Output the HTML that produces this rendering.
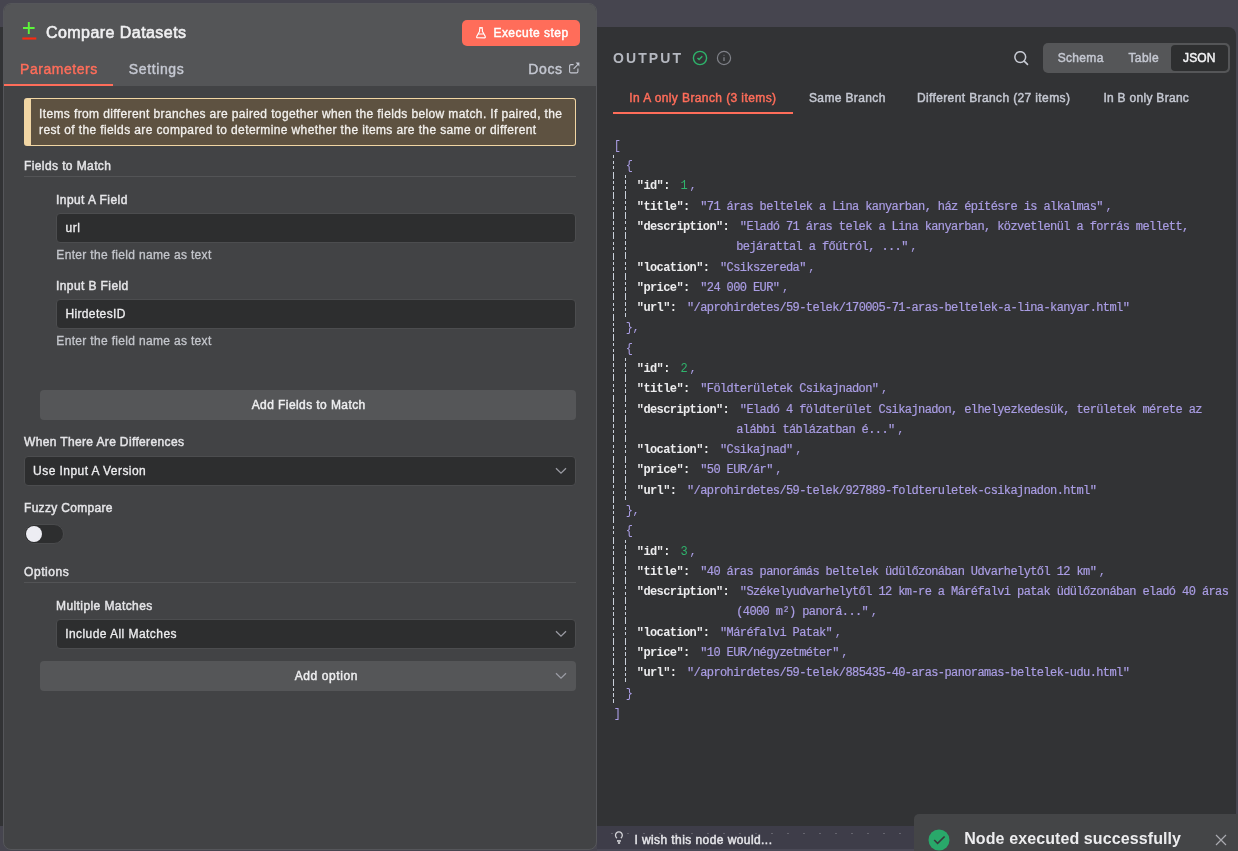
<!DOCTYPE html>
<html><head><meta charset="utf-8"><title>Compare Datasets</title>
<style>
*{box-sizing:border-box;margin:0;padding:0}
html,body{width:1238px;height:851px;overflow:hidden;background:#46454f;font-family:"Liberation Sans",sans-serif;position:relative}
#root{position:absolute;left:0;top:0;width:1238px;height:851px;will-change:transform}
.a{position:absolute}
.t{position:absolute;white-space:nowrap}
.m{position:absolute;white-space:pre;font-family:"Liberation Mono",monospace;font-size:12px;line-height:12px;letter-spacing:-0.600px}
.m b{color:#ececee;font-weight:bold}
.m i{color:#aa9de4;font-style:normal;-webkit-text-stroke:0.2px #aa9de4}
.m u{color:#2fb36c;text-decoration:none}
.m em{color:#aa9de4;font-style:normal}
.m em.cm{margin-left:2.5px}
.g{position:absolute;width:1px;background:repeating-linear-gradient(to bottom,#c9d0da 0 3.3px,transparent 3.3px 5.5px,#c9d0da 5.5px 8.8px,transparent 8.8px 11px,#c9d0da 11px 14.3px,transparent 14.3px 16.5px,#c9d0da 16.5px 20.286px)}
#dark{position:absolute;left:0;top:27px;width:1236px;height:799px;background:#323335;border-top-right-radius:8px}
#left{position:absolute;left:3px;top:3px;width:594px;height:847px;background:#424345;border:1px solid #55565a;border-radius:8px}
#lhead{position:absolute;left:4px;top:4px;width:592px;height:82px;background:#545557;border-radius:7px 7px 0 0}
.inp{position:absolute;background:#2d2e2f;border:1px solid #4c4d4f;border-radius:4px}
.btn{position:absolute;background:#555658;border-radius:4px}
</style></head>
<body><div id="root">
<div id="dark"></div>
<div id="left"></div>
<div id="lhead"></div>
<svg class="a" style="left:20px;top:20px" width="18" height="22" viewBox="0 0 18 22"><path d="M8.8 2v12M3 8h11.6" stroke="#5cf53a" stroke-width="1.9" fill="none"/><path d="M2.3 18.5h14" stroke="#ff2a10" stroke-width="2.1" fill="none"/></svg>
<div class="t" style="left:46.00px;top:24.76px;font-size:16px;line-height:16px;color:#f0f0f2;font-weight:normal;letter-spacing:0.444px;-webkit-text-stroke:0.60px #f0f0f2;">Compare Datasets</div>
<div class="a" style="left:462px;top:20px;width:118px;height:26px;background:#ff6d5a;border-radius:5px"></div>
<svg class="a" style="left:475px;top:26px" width="12" height="14" viewBox="0 0 12 14"><path d="M4.2 1.9h3.6" stroke="#fff" stroke-width="1.6"/><path d="M4.6 2.6v2.6L1.7 10.6a0.8 0.8 0 0 0 0.7 1.2h7.2a0.8 0.8 0 0 0 0.7-1.2L7.4 5.2V2.6M3.1 8h5.8" fill="none" stroke="#fff" stroke-width="1.15" stroke-linejoin="round"/></svg>
<div class="t" style="left:493.40px;top:26.54px;font-size:12px;line-height:12px;color:#ffffff;font-weight:normal;letter-spacing:0.489px;-webkit-text-stroke:0.45px #ffffff;">Execute step</div>
<div class="t" style="left:20.10px;top:62.05px;font-size:14px;line-height:14px;color:#ff6d5a;font-weight:normal;letter-spacing:0.52px;-webkit-text-stroke:0.42px #ff6d5a;">Parameters</div>
<div class="a" style="left:4px;top:84px;width:109px;height:2px;background:#ff6d5a"></div>
<div class="t" style="left:128.80px;top:62.05px;font-size:14px;line-height:14px;color:#c5c8d2;font-weight:normal;letter-spacing:0.62px;-webkit-text-stroke:0.42px #c5c8d2;">Settings</div>
<div class="t" style="left:528.30px;top:61.95px;font-size:14px;line-height:14px;color:#c5c8d2;font-weight:normal;letter-spacing:0.6px;-webkit-text-stroke:0.42px #c5c8d2;">Docs</div>
<svg class="a" style="left:568px;top:62px" width="12" height="12" viewBox="0 0 12 12"><path d="M5.6 2.6H3a1.4 1.4 0 0 0-1.4 1.4v5.5A1.4 1.4 0 0 0 3 10.9h5.5a1.4 1.4 0 0 0 1.4-1.4V6.4M5.6 6.8l4.6-4.6" fill="none" stroke="#c5c8d2" stroke-width="1.1"/><path d="M7.6 0.6h3.8v3.8z" fill="#c5c8d2"/></svg>
<div class="a" style="left:24px;top:98px;width:552px;height:48px;background:#5e5241;border:1px solid #f1d6a4;border-left:7px solid #f1d6a4;border-radius:3px"></div>
<div class="t" style="left:39.00px;top:108.24px;font-size:12px;line-height:12px;color:#f3f1ee;font-weight:normal;letter-spacing:0.38px;-webkit-text-stroke:0.3px #f3f1ee;">Items from different branches are paired together when the fields below match. If paired, the</div>
<div class="t" style="left:39.00px;top:123.94px;font-size:12px;line-height:12px;color:#f3f1ee;font-weight:normal;letter-spacing:0.38px;-webkit-text-stroke:0.3px #f3f1ee;">rest of the fields are compared to determine whether the items are the same or different</div>
<div class="t" style="left:24.00px;top:160.14px;font-size:12px;line-height:12px;color:#e5e5e8;font-weight:normal;letter-spacing:0.398px;-webkit-text-stroke:0.45px #e5e5e8;">Fields to Match</div>
<div class="a" style="left:24px;top:176px;width:552px;height:1px;background:#535456"></div>
<div class="t" style="left:56.00px;top:193.74px;font-size:12px;line-height:12px;color:#e5e5e8;font-weight:normal;letter-spacing:0.44px;-webkit-text-stroke:0.45px #e5e5e8;">Input A Field</div>
<div class="inp" style="left:56px;top:213px;width:520px;height:30px"></div>
<div class="t" style="left:65.40px;top:221.64px;font-size:12px;line-height:12px;color:#eeeef0;font-weight:normal;letter-spacing:0.6px;-webkit-text-stroke:0.3px #eeeef0;">url</div>
<div class="t" style="left:56.30px;top:248.74px;font-size:12px;line-height:12px;color:#c4c6cc;font-weight:normal;letter-spacing:0.33px;-webkit-text-stroke:0.3px #c4c6cc;">Enter the field name as text</div>
<div class="t" style="left:56.00px;top:279.84px;font-size:12px;line-height:12px;color:#e5e5e8;font-weight:normal;letter-spacing:0.406px;-webkit-text-stroke:0.45px #e5e5e8;">Input B Field</div>
<div class="inp" style="left:56px;top:299px;width:520px;height:30px"></div>
<div class="t" style="left:65.40px;top:307.84px;font-size:12px;line-height:12px;color:#eeeef0;font-weight:normal;letter-spacing:0.37px;-webkit-text-stroke:0.3px #eeeef0;">HirdetesID</div>
<div class="t" style="left:56.30px;top:334.84px;font-size:12px;line-height:12px;color:#c4c6cc;font-weight:normal;letter-spacing:0.33px;-webkit-text-stroke:0.3px #c4c6cc;">Enter the field name as text</div>
<div class="btn" style="left:40px;top:390px;width:536px;height:30px"></div>
<div class="t" style="left:251.70px;top:398.54px;font-size:12px;line-height:12px;color:#eeeef0;font-weight:normal;letter-spacing:0.418px;-webkit-text-stroke:0.45px #eeeef0;">Add Fields to Match</div>
<div class="t" style="left:24.00px;top:435.84px;font-size:12px;line-height:12px;color:#e5e5e8;font-weight:normal;letter-spacing:0.358px;-webkit-text-stroke:0.45px #e5e5e8;">When There Are Differences</div>
<div class="inp" style="left:24px;top:456px;width:552px;height:30px"></div>
<div class="t" style="left:33.10px;top:464.84px;font-size:12px;line-height:12px;color:#eeeef0;font-weight:normal;letter-spacing:0.44px;-webkit-text-stroke:0.3px #eeeef0;">Use Input A Version</div>
<svg class="a" style="left:555px;top:467px" width="12" height="8" viewBox="0 0 12 8"><path d="M1 1.2l5 5 5-5" fill="none" stroke="#9b9ca4" stroke-width="1.3"/></svg>
<div class="t" style="left:24.00px;top:502.04px;font-size:12px;line-height:12px;color:#e5e5e8;font-weight:normal;letter-spacing:0.306px;-webkit-text-stroke:0.45px #e5e5e8;">Fuzzy Compare</div>
<div class="a" style="left:24px;top:524px;width:40px;height:20px;background:#2d2e2f;border:1px solid #4a4b4d;border-radius:10px"></div>
<div class="a" style="left:26px;top:526px;width:16px;height:16px;background:#ededf3;border-radius:50%"></div>
<div class="t" style="left:24.00px;top:566.24px;font-size:12px;line-height:12px;color:#e5e5e8;font-weight:normal;letter-spacing:0.567px;-webkit-text-stroke:0.45px #e5e5e8;">Options</div>
<div class="a" style="left:24px;top:582px;width:552px;height:1px;background:#535456"></div>
<div class="t" style="left:56.00px;top:599.64px;font-size:12px;line-height:12px;color:#e5e5e8;font-weight:normal;letter-spacing:0.415px;-webkit-text-stroke:0.45px #e5e5e8;">Multiple Matches</div>
<div class="inp" style="left:56px;top:619px;width:520px;height:30px"></div>
<div class="t" style="left:65.20px;top:627.94px;font-size:12px;line-height:12px;color:#eeeef0;font-weight:normal;letter-spacing:0.44px;-webkit-text-stroke:0.3px #eeeef0;">Include All Matches</div>
<svg class="a" style="left:555px;top:630px" width="12" height="8" viewBox="0 0 12 8"><path d="M1 1.2l5 5 5-5" fill="none" stroke="#9b9ca4" stroke-width="1.3"/></svg>
<div class="btn" style="left:40px;top:661px;width:536px;height:30px"></div>
<div class="t" style="left:294.70px;top:669.54px;font-size:12px;line-height:12px;color:#eeeef0;font-weight:normal;letter-spacing:0.592px;-webkit-text-stroke:0.45px #eeeef0;">Add option</div>
<svg class="a" style="left:555px;top:672px" width="12" height="8" viewBox="0 0 12 8"><path d="M1 1.2l5 5 5-5" fill="none" stroke="#9b9ca4" stroke-width="1.3"/></svg>
<div class="t" style="left:613.00px;top:51.35px;font-size:14px;line-height:14px;color:#b5b8c0;font-weight:bold;letter-spacing:2.1px;">OUTPUT</div>
<svg class="a" style="left:692px;top:50px" width="16" height="16" viewBox="0 0 16 16"><circle cx="8" cy="8" r="6.6" fill="none" stroke="#2eb36b" stroke-width="1.4"/><path d="M5.5 8l1.6 1.5 3.2-3.2" fill="none" stroke="#2eb36b" stroke-width="1.5"/></svg>
<svg class="a" style="left:716px;top:50px" width="16" height="16" viewBox="0 0 16 16"><circle cx="8" cy="8" r="6.6" fill="none" stroke="#7f8188" stroke-width="1.2"/><path d="M8 7.2v3.8" stroke="#7f8188" stroke-width="1.3"/><path d="M7.3 5.3h1.4" stroke="#6f7177" stroke-width="0.8"/></svg>
<svg class="a" style="left:1013px;top:51px" width="16" height="16" viewBox="0 0 16 16"><circle cx="7.25" cy="6.1" r="5.4" fill="none" stroke="#c9ccd5" stroke-width="1.5"/><path d="M11.2 10.1l3.3 3.3" stroke="#c9ccd5" stroke-width="1.6" stroke-linecap="round"/></svg>
<div class="a" style="left:1043px;top:43px;width:187px;height:30px;background:#555658;border-radius:5px"></div>
<div class="a" style="left:1171px;top:45px;width:57px;height:26px;background:#2e2f30;border-radius:4px"></div>
<div class="t" style="left:1057.70px;top:51.74px;font-size:12px;line-height:12px;color:#c5c8d2;font-weight:normal;letter-spacing:0.333px;-webkit-text-stroke:0.45px #c5c8d2;">Schema</div>
<div class="t" style="left:1128.50px;top:51.74px;font-size:12px;line-height:12px;color:#c5c8d2;font-weight:normal;letter-spacing:0.353px;-webkit-text-stroke:0.45px #c5c8d2;">Table</div>
<div class="t" style="left:1183.00px;top:51.74px;font-size:12px;line-height:12px;color:#f4f4f6;font-weight:normal;letter-spacing:0.168px;-webkit-text-stroke:0.45px #f4f4f6;">JSON</div>
<div class="t" style="left:629.30px;top:91.84px;font-size:12px;line-height:12px;color:#ff6d5a;font-weight:normal;letter-spacing:0.4px;-webkit-text-stroke:0.45px #ff6d5a;">In A only Branch (3 items)</div>
<div class="a" style="left:613px;top:112px;width:180px;height:2px;background:#ff6d5a"></div>
<div class="t" style="left:809.00px;top:91.84px;font-size:12px;line-height:12px;color:#c5c8d2;font-weight:normal;letter-spacing:0.364px;-webkit-text-stroke:0.45px #c5c8d2;">Same Branch</div>
<div class="t" style="left:916.90px;top:91.84px;font-size:12px;line-height:12px;color:#c5c8d2;font-weight:normal;letter-spacing:0.378px;-webkit-text-stroke:0.45px #c5c8d2;">Different Branch (27 items)</div>
<div class="t" style="left:1103.40px;top:91.84px;font-size:12px;line-height:12px;color:#c5c8d2;font-weight:normal;letter-spacing:0.293px;-webkit-text-stroke:0.45px #c5c8d2;">In B only Branc</div>
<div class="m" style="left:613.80px;top:139.81px"><em>[</em></div>
<div class="m" style="left:625.80px;top:160.09px"><em>{</em></div>
<div class="m" style="left:636.80px;top:180.38px"><b>&quot;id&quot;:</b></div>
<div class="m" style="left:680.40px;top:180.38px"><u>1</u><em class="cm">,</em></div>
<div class="m" style="left:636.80px;top:200.67px"><b>&quot;title&quot;:</b></div>
<div class="m" style="left:700.20px;top:200.67px"><i>&quot;71 áras beltelek a Lina kanyarban, ház építésre is alkalmas&quot;</i><em class="cm">,</em></div>
<div class="m" style="left:636.80px;top:220.95px"><b>&quot;description&quot;:</b></div>
<div class="m" style="left:739.80px;top:220.95px"><i>&quot;Eladó 71 áras telek a Lina kanyarban, közvetlenül a forrás mellett,</i></div>
<div class="m" style="left:736.20px;top:241.24px"><i>bejárattal a főútról, ...&quot;</i><em class="cm">,</em></div>
<div class="m" style="left:636.80px;top:261.52px"><b>&quot;location&quot;:</b></div>
<div class="m" style="left:720.00px;top:261.52px"><i>&quot;Csikszereda&quot;</i><em class="cm">,</em></div>
<div class="m" style="left:636.80px;top:281.81px"><b>&quot;price&quot;:</b></div>
<div class="m" style="left:700.20px;top:281.81px"><i>&quot;24 000 EUR&quot;</i><em class="cm">,</em></div>
<div class="m" style="left:636.80px;top:302.10px"><b>&quot;url&quot;:</b></div>
<div class="m" style="left:687.00px;top:302.10px"><i>&quot;/aprohirdetes/59-telek/170005-71-aras-beltelek-a-lina-kanyar.html&quot;</i></div>
<div class="m" style="left:625.80px;top:322.38px"><em>},</em></div>
<div class="m" style="left:625.80px;top:342.67px"><em>{</em></div>
<div class="m" style="left:636.80px;top:362.95px"><b>&quot;id&quot;:</b></div>
<div class="m" style="left:680.40px;top:362.95px"><u>2</u><em class="cm">,</em></div>
<div class="m" style="left:636.80px;top:383.24px"><b>&quot;title&quot;:</b></div>
<div class="m" style="left:700.20px;top:383.24px"><i>&quot;Földterületek Csikajnadon&quot;</i><em class="cm">,</em></div>
<div class="m" style="left:636.80px;top:403.53px"><b>&quot;description&quot;:</b></div>
<div class="m" style="left:739.80px;top:403.53px"><i>&quot;Eladó 4 földterület Csikajnadon, elhelyezkedesük, területek mérete az</i></div>
<div class="m" style="left:736.20px;top:423.81px"><i>alábbi táblázatban é...&quot;</i><em class="cm">,</em></div>
<div class="m" style="left:636.80px;top:444.10px"><b>&quot;location&quot;:</b></div>
<div class="m" style="left:720.00px;top:444.10px"><i>&quot;Csikajnad&quot;</i><em class="cm">,</em></div>
<div class="m" style="left:636.80px;top:464.38px"><b>&quot;price&quot;:</b></div>
<div class="m" style="left:700.20px;top:464.38px"><i>&quot;50 EUR/ár&quot;</i><em class="cm">,</em></div>
<div class="m" style="left:636.80px;top:484.67px"><b>&quot;url&quot;:</b></div>
<div class="m" style="left:687.00px;top:484.67px"><i>&quot;/aprohirdetes/59-telek/927889-foldteruletek-csikajnadon.html&quot;</i></div>
<div class="m" style="left:625.80px;top:504.96px"><em>},</em></div>
<div class="m" style="left:625.80px;top:525.24px"><em>{</em></div>
<div class="m" style="left:636.80px;top:545.53px"><b>&quot;id&quot;:</b></div>
<div class="m" style="left:680.40px;top:545.53px"><u>3</u><em class="cm">,</em></div>
<div class="m" style="left:636.80px;top:565.81px"><b>&quot;title&quot;:</b></div>
<div class="m" style="left:700.20px;top:565.81px"><i>&quot;40 áras panorámás beltelek üdülőzonában Udvarhelytől 12 km&quot;</i><em class="cm">,</em></div>
<div class="m" style="left:636.80px;top:586.10px"><b>&quot;description&quot;:</b></div>
<div class="m" style="left:739.80px;top:586.10px"><i>&quot;Székelyudvarhelytől 12 km-re a Máréfalvi patak üdülőzonában eladó 40 áras</i></div>
<div class="m" style="left:736.20px;top:606.39px"><i>(4000 m²) panorá...&quot;</i><em class="cm">,</em></div>
<div class="m" style="left:636.80px;top:626.67px"><b>&quot;location&quot;:</b></div>
<div class="m" style="left:720.00px;top:626.67px"><i>&quot;Máréfalvi Patak&quot;</i><em class="cm">,</em></div>
<div class="m" style="left:636.80px;top:646.96px"><b>&quot;price&quot;:</b></div>
<div class="m" style="left:700.20px;top:646.96px"><i>&quot;10 EUR/négyzetméter&quot;</i><em class="cm">,</em></div>
<div class="m" style="left:636.80px;top:667.24px"><b>&quot;url&quot;:</b></div>
<div class="m" style="left:687.00px;top:667.24px"><i>&quot;/aprohirdetes/59-telek/885435-40-aras-panoramas-beltelek-udu.html&quot;</i></div>
<div class="m" style="left:625.80px;top:687.53px"><em>}</em></div>
<div class="m" style="left:613.80px;top:707.82px"><em>]</em></div>
<div class="g" style="left:613px;top:154.79px;height:547.72px"></div>
<div class="g" style="left:625px;top:175.07px;height:142.00px"></div>
<div class="g" style="left:625px;top:357.65px;height:142.00px"></div>
<div class="g" style="left:625px;top:540.22px;height:142.00px"></div>
<div class="a" style="left:597px;top:826px;width:641px;height:25px;background:#3e3d49"></div>
<div class="a" style="left:604px;top:832px;width:634px;height:4px;background-image:radial-gradient(ellipse 1.3px 0.9px at 8px 1.5px,#64636d 60%,transparent 100%);background-size:16px 4px"></div>
<div class="a" style="left:597px;top:849px;width:641px;height:2px;background:#4a4956"></div>
<svg class="a" style="left:612px;top:829px" width="14" height="16" viewBox="0 0 14 16"><path d="M4.95 9.1A3.4 3.4 0 1 1 8.85 9.1" fill="none" stroke="#d2d2d6" stroke-width="1.3"/><rect x="5" y="11" width="3.9" height="1.9" fill="#bdbdc2"/><rect x="5.9" y="12.9" width="2.2" height="2.1" fill="#bdbdc2"/></svg>
<div class="t" style="left:634.40px;top:833.84px;font-size:12px;line-height:12px;color:#e6e6ea;font-weight:normal;letter-spacing:0.424px;-webkit-text-stroke:0.45px #e6e6ea;">I wish this node would...</div>
<div class="a" style="left:914px;top:814px;width:340px;height:60px;background:#444547;border-radius:5px"></div>
<svg class="a" style="left:928px;top:829px" width="22" height="22" viewBox="0 0 22 22"><circle cx="11" cy="11" r="10.5" fill="#29a86a"/><path d="M6.2 11l3.4 3.4 7-6.9" fill="none" stroke="#38393b" stroke-width="1.6"/></svg>
<div class="t" style="left:964.20px;top:830.66px;font-size:16px;line-height:16px;color:#ececee;font-weight:bold;letter-spacing:0.1px;">Node executed successfully</div>
<svg class="a" style="left:1215px;top:834px" width="12" height="12" viewBox="0 0 12 12"><path d="M1 1l10 10M11 1L1 11" stroke="#a9aab0" stroke-width="1.2"/></svg>
</div></body></html>
